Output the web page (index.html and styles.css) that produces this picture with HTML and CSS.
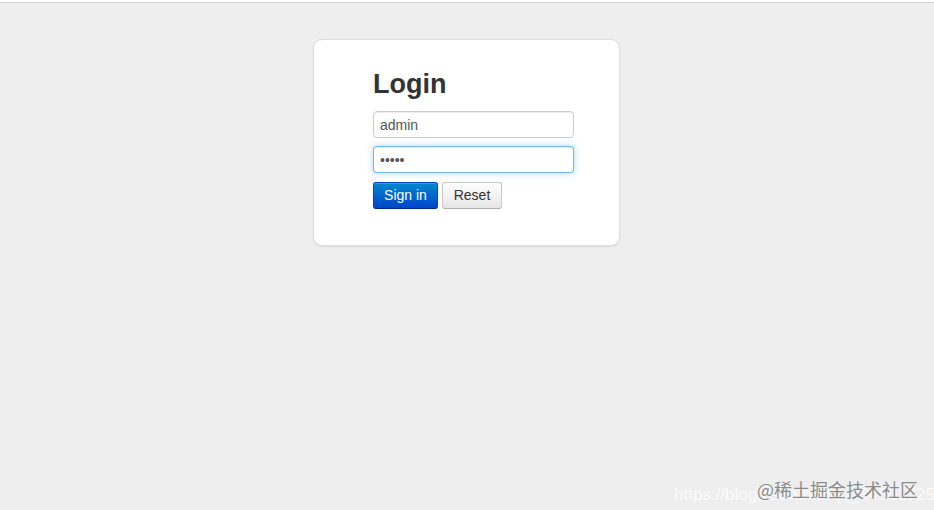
FILE: index.html
```html
<!DOCTYPE html>
<html lang="en">
<head>
    <meta charset="UTF-8">
    <meta name="viewport" content="width=device-width, initial-scale=1.0">
    <title>Login</title>
    <link rel="stylesheet" href="styles.css">
</head>
<body>
    <div class="topline"></div>
    <div class="page">
        <form class="form-signin">
            <h2 class="form-signin-heading">Login</h2>
            <input type="text" class="input-block" value="admin">
            <input type="password" class="input-block focused" value="admin">
            <div class="actions">
                <button type="button" class="btn btn-primary">Sign in</button>
                <button type="button" class="btn">Reset</button>
            </div>
        </form>
    </div>
    <div class="watermark">
        <span class="wm-url">https://blog.csdn.net/qq_34501725</span>
        <span class="wm-site">@稀土掘金技术社区</span>
    </div>
</body>
</html>
```

FILE: styles.css
```css
html, body{
    margin: 0;
    height: 100%;
}
body{
    background-color: #eeeeee;
    font-family: "Liberation Sans", Arial, sans-serif;
    font-size: 14px;
    color: #333;
    position: relative;
    overflow: hidden;
}
.topline{
    height: 2px;
    background: #fff;
    border-bottom: 1px solid #d4d4d4;
}
.page{
    display: flex;
    justify-content: center;
    padding-top: 36px;
}
.form-signin{
    width: 307px;
    box-sizing: border-box;
    padding: 24px 46px 36px 59px;
    background-color: #fff;
    border: 1px solid #dedede;
    border-radius: 9px;
    box-shadow: 0 1px 2px rgba(0, 0, 0, 0.08);
    display: flex;
    flex-direction: column;
    margin-left: -1px;
}
.form-signin-heading{
    margin: 0 0 7px;
    font-size: 27px;
    line-height: 40px;
    font-weight: bold;
    color: #333;
}
.input-block{
    width: 201px;
    height: 27px;
    box-sizing: border-box;
    margin: 0 0 8px;
    padding: 4px 6px;
    font-family: inherit;
    font-size: 14px;
    color: #555;
    background: #fff;
    border: 1px solid #ccc;
    border-radius: 4px;
    box-shadow: inset 0 1px 1px rgba(0, 0, 0, 0.075);
    outline: none;
}
.input-block.focused{
    border-color: rgba(82, 168, 236, 0.8);
    box-shadow: inset 0 1px 1px rgba(0, 0, 0, 0.075), 0 0 6px rgba(82, 168, 236, 0.5);
}
.actions{
    display: flex;
    gap: 4px;
    margin-top: 1px;
}
.btn{
    width: 60px;
    height: 27px;
    padding: 0 0 1px;
    font-family: inherit;
    font-size: 14px;
    color: #333;
    background-image: linear-gradient(to bottom, #ffffff, #e6e6e6);
    border: 1px solid #c8c8c8;
    border-bottom-color: #b3b3b3;
    border-radius: 3px;
    box-shadow: inset 0 1px 0 rgba(255, 255, 255, 0.2), 0 1px 2px rgba(0, 0, 0, 0.05);
}
.btn-primary{
    width: 65px;
    color: #fff;
    background-image: linear-gradient(to bottom, #0088cc, #0044cc);
    border-color: #0044cc #0044cc #002a80;
}
.watermark{
    position: absolute;
    right: 0;
    bottom: 0;
    width: 260px;
    height: 40px;
}
.wm-url{
    position: absolute;
    left: 0;
    top: 15px;
    font-size: 17px;
    color: rgba(255, 255, 255, 0.75);
    white-space: nowrap;
}
.wm-site{
    position: absolute;
    right: 16px;
    top: 6px;
    font-family: "Noto Sans CJK SC", sans-serif;
    font-size: 18px;
    color: #8a8a8a;
    text-shadow: 0 0 2px #fff;
    white-space: nowrap;
}
```
